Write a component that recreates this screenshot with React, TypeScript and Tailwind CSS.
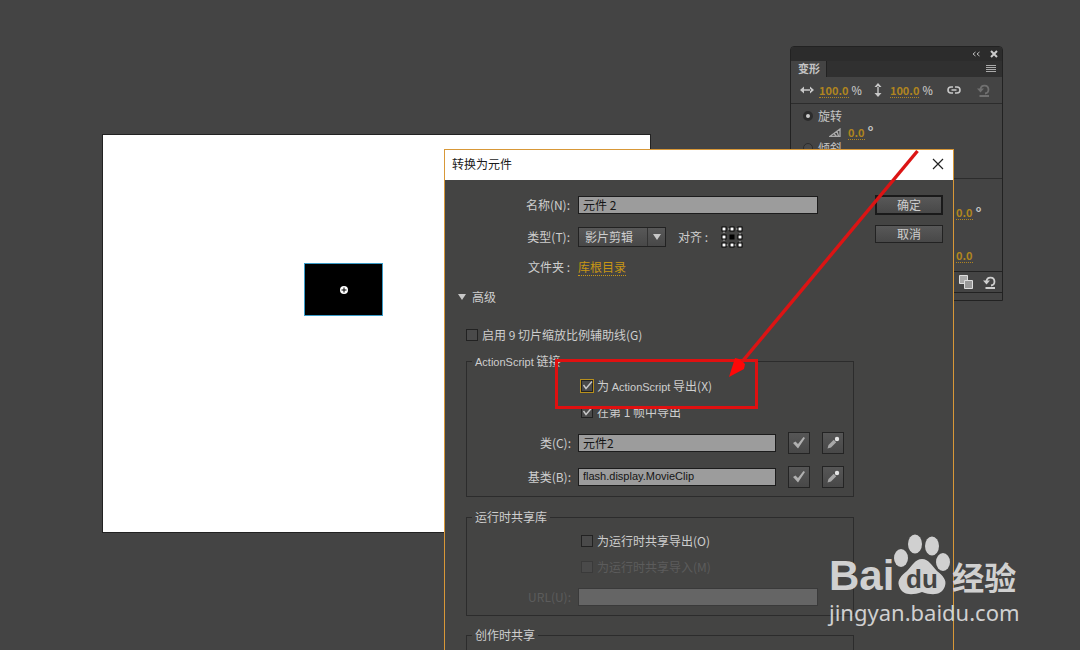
import type { ReactNode } from "react";

function Latin({ children }: { children: string }) {
  return <span className="font-['Liberation_Sans',sans-serif] text-[11px]">{children}</span>;
}

function CheckBox({
  label,
  checked = false,
  disabled = false,
  focused = false,
}: {
  label: ReactNode;
  checked?: boolean;
  disabled?: boolean;
  focused?: boolean;
}) {
  return (
    <label className={`flex h-5 items-center gap-[3px] ${disabled ? "text-[#5c5c5c]" : ""}`}>
      <span className="relative flex size-[14px] shrink-0">
        <input
          type="checkbox"
          defaultChecked={checked}
          disabled={disabled}
          className={`peer m-px size-3 appearance-none border bg-[#4a4a4a] ${
            focused
              ? "border-[#222] outline outline-[#b8901c]"
              : disabled
                ? "border-[#3a3a3a]"
                : "border-[#222]"
          }`}
        />
        <svg
          viewBox="0 0 14 14"
          className="pointer-events-none absolute inset-0 hidden size-[14px] peer-checked:block"
        >
          <path d="M3.5 6l2.500 3.500 6-7" fill="none" stroke="#c8c8c8" strokeWidth="1.400" />
        </svg>
      </span>
      <span>{label}</span>
    </label>
  );
}

function Field({ label, id, children }: { label: string; id: string; children: ReactNode }) {
  return (
    <>
      <label htmlFor={id} className="w-[104px] shrink-0 text-right">
        {label}
      </label>
      {children}
    </>
  );
}

function Group({ title, className, children }: { title: ReactNode; className: string; children?: ReactNode }) {
  return (
    <fieldset className={`min-w-0 border border-[#2c2c2c] ${className}`}>
      <legend className="ml-[5px] h-4 px-[3px] leading-4">{title}</legend>
      {children}
    </fieldset>
  );
}

const textInput = "h-[18px] border border-[#1c1c1c] bg-[#9c9c9c] px-1 pb-0.5 leading-4 text-[#151515]";

const iconButton =
  "flex size-[22px] shrink-0 items-center justify-center border border-[#242424] bg-linear-to-b from-[#565656] to-[#484848]";

function ClassRow({
  label,
  id,
  value,
  inputClass,
}: {
  label: string;
  id: string;
  value: string;
  inputClass: string;
}) {
  return (
    <div className="flex h-6 items-center gap-[7px]">
      <Field label={label} id={id}>
        <input id={id} defaultValue={value} className={`${textInput} ${inputClass} w-[198px]`} />
      </Field>
      <div className="ml-[5px] flex gap-3">
        <button type="button" aria-label="验证" className={iconButton}>
          <svg viewBox="0 0 20 20" className="size-5">
            <path d="M4 10l2.500-1.500L9 11l5.500-7 1.500 1-7 10.500z" fill="#b0b0b0" />
          </svg>
        </button>
        <button type="button" aria-label="编辑" className={iconButton}>
          <svg viewBox="0 0 20 20" className="size-5">
            <path d="M4.500 15.500l1-3.500 5.500-5.500 2.500 2.500L8 14.500z" fill="#a8a8a8" />
            <path d="M10.500 5.500l4 4" stroke="#484848" strokeWidth="1.200" />
            <circle cx="14" cy="6" r="2.200" fill="#e4e4e4" />
          </svg>
        </button>
      </div>
    </div>
  );
}

function AlignGrid() {
  const points = [2, 10, 18];
  return (
    <svg viewBox="0 0 20 20" className="size-5 overflow-visible" role="img" aria-label="对齐">
      <path d="M2 2h16v16H2z" fill="none" stroke="#bbb" strokeDasharray="2 2" />
      {points.map((y) =>
        points.map((x) => (
          <rect
            key={`${x}-${y}`}
            x={x - 2}
            y={y - 2}
            width="4"
            height="4"
            fill={x === 10 && y === 10 ? "#000" : "#fff"}
            stroke="#000"
          />
        )),
      )}
    </svg>
  );
}

function ConvertDialog() {
  return (
    <section className="absolute top-[149px] left-[444px] w-[510px] border border-[#d89838] bg-[#444443] text-[12px] text-[#cecece]">
      <header className="flex h-[30px] items-center justify-between bg-white pr-[9px] pb-0.5 pl-[7px] text-[#1a1a1a]">
        <h2>转换为元件</h2>
        <button type="button" aria-label="关闭">
          <svg viewBox="0 0 12 12" className="size-3">
            <path d="M1 1l10 10M11 1L1 11" stroke="#222" strokeWidth="1.200" />
          </svg>
        </button>
      </header>

      <div className="flex gap-[21px] pt-[15px] pr-[10px] pb-6 pl-[21px]">
        <form className="min-w-0 flex-1">
          <div className="flex h-5 items-center gap-2">
            <Field label="名称(N):" id="name">
              <input id="name" defaultValue="元件 2" className={`${textInput} w-60 text-[12px]`} />
            </Field>
          </div>
          <div className="mt-3 flex h-5 items-center gap-2">
            <Field label="类型(T):" id="type">
              <div className="relative flex">
                <select
                  id="type"
                  className="h-5 w-[88px] appearance-none border border-[#222] bg-linear-to-b from-[#585858] to-[#484848] pl-1.5 text-[12px] leading-4"
                >
                  <option>影片剪辑</option>
                </select>
                <span className="pointer-events-none absolute inset-y-px right-px flex w-[18px] items-center justify-center border-l border-[#333]">
                  <svg viewBox="0 0 8 6" className="h-1.5 w-2">
                    <path d="M0 0h8L4 6z" fill="#c8c8c8" />
                  </svg>
                </span>
              </div>
            </Field>
            <span className="mr-1.5 ml-1">对齐 :</span>
            <AlignGrid />
          </div>
          <div className="mt-2.5 flex h-5 items-center gap-2">
            <Field label="文件夹 :" id="folder">
              <a id="folder" href="#folder" className="border-b border-dotted border-[#c89614] leading-4 text-[#c89614]">
                库根目录
              </a>
            </Field>
          </div>
          <button type="button" className="-ml-2 mt-2.5 flex h-5 items-center gap-1.5">
            <svg viewBox="0 0 8 6" className="h-1.5 w-2">
              <path d="M0 0h8L4 6z" fill="#c8c8c8" />
            </svg>
            高级
          </button>
          <div className="-ml-px mt-[18px]">
            <CheckBox label="启用 9 切片缩放比例辅助线(G)" />
          </div>

          <Group title={<><Latin>ActionScript</Latin> 链接</>} className="mt-2 pt-[7px] pb-[7px]">
            <div className="flex flex-col gap-1.5 pl-[113px]">
              <CheckBox label={<>为 <Latin>ActionScript</Latin> 导出(X)</>} checked focused />
              <CheckBox label="在第 1 帧中导出" checked />
            </div>
            <div className="mt-[9px] flex flex-col gap-2.5">
              <ClassRow label="类(C):" id="class" value="元件2" inputClass="text-[12px]" />
              <ClassRow
                label="基类(B):"
                id="base"
                value="flash.display.MovieClip"
                inputClass="font-['Liberation_Sans',sans-serif] text-[11px]"
              />
            </div>
          </Group>

          <Group title="运行时共享库" className="mt-3 pt-1.5 pb-2">
            <div className="flex flex-col gap-1.5 pl-[113px]">
              <CheckBox label="为运行时共享导出(O)" />
              <CheckBox label="为运行时共享导入(M)" disabled />
            </div>
            <div className="mt-2.5 flex h-5 items-center gap-[7px] text-[#5c5c5c]">
              <Field label="URL(U):" id="url">
                <input
                  id="url"
                  disabled
                  className="h-[18px] w-60 border border-[#3a3a3a] bg-[#656565]"
                />
              </Field>
            </div>
          </Group>

          <Group title="创作时共享" className="mt-[11px] h-24" />
        </form>

        <div className="flex w-[68px] shrink-0 flex-col gap-2.5">
          <button
            type="button"
            className="h-5 border-2 border-[#1a1a1a] bg-linear-to-b from-[#585858] to-[#484848] leading-4"
          >
            确定
          </button>
          <button
            type="button"
            className="h-[18px] border border-[#222] bg-linear-to-b from-[#585858] to-[#484848] leading-4"
          >
            取消
          </button>
        </div>
      </div>
    </section>
  );
}

function Amount({ value, unit }: { value: string; unit?: "%" | "°" }) {
  return (
    <span className="flex items-center gap-[3px] text-[11px] font-bold">
      <a href="#value" className="border-b border-dotted border-[#b08420] leading-[14px] text-[#b08420]">
        {value}
      </a>
      {unit === "%" && <span className="font-medium">%</span>}
      {unit === "°" && <span className="text-[15px] leading-3">°</span>}
    </span>
  );
}

function ResetIcon({ color }: { color: string }) {
  return (
    <svg viewBox="0 0 14 14" className="size-[14px]">
      <path d="M3.500 6a4 4 0 114.500 4.500M2.500 13h9.500" fill="none" stroke={color} strokeWidth="1.800" />
      <path d="M0 5.500h7L3.500 9.500z" fill={color} />
    </svg>
  );
}

function TransformPanel() {
  return (
    <section className="absolute top-[46px] left-[790px] w-[213px] overflow-hidden rounded-t border border-[#222] bg-[#444] text-[12px] text-[#c4c4c4]">
      <div className="flex h-[14px] items-center justify-end gap-2.5 bg-[#2c2c2c] pr-1">
        <svg viewBox="0 0 8 6" className="h-1.5 w-2">
          <path d="M3.500 1L1 3l2.500 2M7.500 1L5 3l2.500 2" fill="none" stroke="#bbb" />
        </svg>
        <svg viewBox="0 0 8 8" className="size-2">
          <path d="M1 1l6 6M7 1L1 7" stroke="#ccc" strokeWidth="2" />
        </svg>
      </div>
      <div className="flex h-4 items-center justify-between bg-[#303030] pr-1.5">
        <h2 className="h-4 w-9 border-r border-[#222] bg-[#444] pl-[7px] text-[11px] leading-[14px] font-bold">
          变形
        </h2>
        <svg viewBox="0 0 10 8" className="h-2 w-2.5">
          <path d="M0 .5h10M0 2.500h10M0 4.500h10M0 6.500h10" stroke="#aaa" />
        </svg>
      </div>
      <div className="flex h-[27px] items-center border-b border-[#2c2c2c] pl-[9px]">
        <svg viewBox="0 0 14 8" className="mr-[5px] h-2 w-[14px]">
          <path d="M0 4l4-3.500v7zM14 4l-4-3.500v7zM3 3.300h8v1.400H3z" fill="#c8c8c8" />
        </svg>
        <Amount value="100.0" unit="%" />
        <svg viewBox="0 0 8 14" className="mr-2 ml-3 h-[14px] w-2">
          <path d="M4 0L.5 4h7zM4 14L.5 10h7zM3.300 3h1.400v8H3.300z" fill="#c8c8c8" />
        </svg>
        <Amount value="100.0" unit="%" />
        <svg viewBox="0 0 14 8" className="mr-4 ml-[14px] h-2 w-[14px]">
          <path d="M6 1H4a3 3 0 000 6h2M8 1h2a3 3 0 010 6H8M4.500 4h5" fill="none" stroke="#c8c8c8" strokeWidth="1.600" />
        </svg>
        <ResetIcon color="#707070" />
      </div>
      <div className="h-[75px] border-b border-[#2c2c2c] pt-1 pl-3">
        <label className="flex h-4 items-center gap-[5px]">
          <input
            type="radio"
            name="mode"
            defaultChecked
            className="size-2.5 appearance-none rounded-full border-[3px] border-[#2c2c2c] bg-[#ccc]"
          />
          旋转
        </label>
        <div className="flex h-4 items-center gap-[7px] pl-[26px]">
          <svg viewBox="0 0 12 9" className="h-[9px] w-3">
            <path d="M11 1L1 8.300h10zM5 5.500l2.500 3M8 3.500l1.500 4.500" fill="none" stroke="#aaa" strokeWidth="1.300" />
          </svg>
          <Amount value="0.0" unit="°" />
        </div>
        <label className="flex h-4 items-center gap-[5px]">
          <input
            type="radio"
            name="mode"
            className="size-2.5 appearance-none rounded-full border border-[#2c2c2c] bg-[#484848]"
          />
          倾斜
        </label>
      </div>
      <div className="flex h-[93px] flex-col gap-7 border-b border-[#222] pt-[26px] pl-[165px]">
        <Amount value="0.0" unit="°" />
        <Amount value="0.0" />
      </div>
      <div className="flex h-[21px] items-center justify-end gap-2.5 border-b border-[#222] pr-[5px]">
        <svg viewBox="0 0 14 14" className="size-[14px]">
          <path d="M.5.5h8v8h-8z" fill="#aaa" stroke="#ddd" />
          <path d="M5.500 5.500h8v8h-8z" fill="#999" stroke="#ddd" />
        </svg>
        <ResetIcon color="#d0d0d0" />
      </div>
      <div className="h-[7px]" />
    </section>
  );
}

function Stage() {
  return (
    <div className="absolute top-[134px] left-[102px] h-[399px] w-[549px] border border-[#222] bg-white">
      <div className="absolute top-[128px] left-[201px] flex h-[53px] w-[79px] items-center justify-center border border-[#3a9cc8] bg-black">
        <svg viewBox="0 0 8 8" className="size-2">
          <circle cx="4" cy="4" r="4" fill="#fff" />
          <path d="M4 1.500v5M1.500 4h5" stroke="#000" />
        </svg>
      </div>
    </div>
  );
}

function Callout() {
  return (
    <>
      <div className="pointer-events-none absolute top-[359px] left-[555px] h-[50px] w-[203px] border-[3px] border-[#e01010]" />
      <svg viewBox="0 0 190 230" className="pointer-events-none absolute top-[149px] left-[729px] h-[230px] w-[190px]">
        <path d="M188.500 2L12 214" stroke="#dc1414" strokeWidth="3.400" />
        <path d="M0 228l6-19 4 1 6 5-1 5z" fill="#ff0808" />
      </svg>
    </>
  );
}

function Watermark() {
  return (
    <div className="pointer-events-none absolute top-[534px] left-[829px] text-[#d8d8d8] opacity-95">
      <div className="flex h-[62px] items-end">
        <span className="font-['Liberation_Sans',sans-serif] text-[42px] leading-10 font-bold">Bai</span>
        <svg viewBox="0 0 58 62" className="-ml-[3px] h-[62px] w-[58px] overflow-visible">
          <g fill="#d8d8d8">
            <ellipse cx="10" cy="24" rx="7" ry="9" />
            <ellipse cx="24" cy="10" rx="7" ry="9.500" />
            <ellipse cx="41" cy="12" rx="7" ry="9.500" />
            <ellipse cx="52" cy="28" rx="7" ry="9" />
            <path d="M31 25c7 0 10 7 15 12 6 5 10 9 8 15-3 9-12 10-23 6-11 4-20 3-23-6-2-6 2-10 8-15 5-5 8-12 15-12z" />
          </g>
          <text x="31" y="54" textAnchor="middle" fontFamily="Liberation Sans, sans-serif" fontSize="26" fontWeight="bold" fill="#444">
            du
          </text>
        </svg>
        <span className="ml-[3px] text-[32px] leading-10 font-bold">经验</span>
      </div>
      <p className="pt-0.5 font-['Noto_Sans',sans-serif] text-[22px] leading-7">jingyan.baidu.com</p>
    </div>
  );
}

export default function App() {
  return (
    <main className="relative h-screen overflow-hidden bg-[#444] font-['Noto_Sans_CJK_SC',sans-serif]">
      <Stage />
      <TransformPanel />
      <ConvertDialog />
      <Callout />
      <Watermark />
    </main>
  );
}
